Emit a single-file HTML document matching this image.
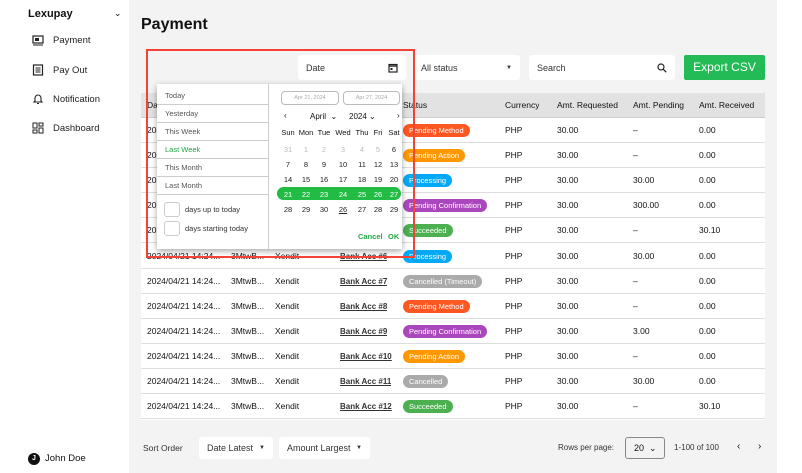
<!DOCTYPE html>
<html><head><meta charset="utf-8"><style>
*{box-sizing:border-box;margin:0;padding:0}
body{width:802px;height:473px;overflow:hidden;font-family:"Liberation Sans",sans-serif;background:#fff;position:relative;color:#111}
.a{position:absolute}
.side div.it{position:absolute;left:32px;font-size:9.5px;color:#222;display:flex;align-items:center}
.main{left:129px;top:0;width:648px;height:473px;background:#f3f3f3}
.box{background:#fff;border-radius:3px;font-size:9px;color:#333;display:flex;align-items:center;padding:0 8px}
.tbl{left:141px;top:93px;width:624px;height:327px;background:#fff;font-size:8.5px}
.hd{position:absolute;left:0;top:0;width:624px;height:25px;background:#e2e2e2;border-bottom:1px solid #ccc}
.row{position:absolute;left:0;width:624px;height:25px;border-bottom:1px solid #ddd}
.c{position:absolute;top:0;line-height:25px;white-space:nowrap;overflow:hidden}
.bd{position:absolute;top:6px;height:13px;line-height:13px;border-radius:7px;color:#fff;font-size:7.5px;padding:0 6px;white-space:nowrap}
.bank{text-decoration:underline;font-weight:bold;color:#333;font-size:8px}
.pop{left:157px;top:84px;width:245px;height:165px;background:#fff;box-shadow:0 2px 6px rgba(0,0,0,.35);font-size:7.5px}
.li{position:absolute;left:0;width:111px;height:18px;border-bottom:1px solid #ccc;padding-left:8px;line-height:18px;color:#555}
.cal span{position:absolute;width:18px;text-align:center;font-size:7.5px}
</style></head><body>
<div class="side">
<div class="a" style="left:28px;top:8px;font-weight:bold;font-size:11px">Lexupay</div>
<div class="a" style="left:114px;top:8px;font-size:9px">⌄</div>
<div class="it" style="top:35px"><svg width="12" height="11" viewBox="0 0 12 11"><rect x="1" y="1" width="10" height="7" fill="none" stroke="#222" stroke-width="1.2"/><rect x="3" y="3" width="4" height="3" fill="#222"/><line x1="1" y1="10" x2="11" y2="10" stroke="#222"/></svg><span style="margin-left:9px">Payment</span></div>
<div class="it" style="top:64px"><svg width="12" height="12" viewBox="0 0 12 12"><rect x="1.5" y="1" width="9" height="10" fill="none" stroke="#222" stroke-width="1.2"/><line x1="3.5" y1="4" x2="8.5" y2="4" stroke="#222"/><line x1="3.5" y1="6" x2="8.5" y2="6" stroke="#222"/><line x1="3.5" y1="8" x2="8.5" y2="8" stroke="#222"/></svg><span style="margin-left:9px">Pay Out</span></div>
<div class="it" style="top:93px"><svg width="12" height="12" viewBox="0 0 12 12"><path d="M3 8V5a3 3 0 0 1 6 0v3l1 1H2z M5 10.5h2" fill="none" stroke="#222" stroke-width="1.1"/></svg><span style="margin-left:9px">Notification</span></div>
<div class="it" style="top:122px"><svg width="12" height="12" viewBox="0 0 12 12"><rect x="1" y="1" width="4" height="5" fill="none" stroke="#222"/><rect x="7" y="1" width="4" height="3" fill="none" stroke="#222"/><rect x="1" y="8" width="4" height="3" fill="none" stroke="#222"/><rect x="7" y="6" width="4" height="5" fill="none" stroke="#222"/></svg><span style="margin-left:9px">Dashboard</span></div>
<div class="a" style="left:28px;top:453px;width:12px;height:12px;border-radius:6px;background:#111;color:#fff;font-size:7px;text-align:center;line-height:12px;font-weight:bold">J</div>
<div class="a" style="left:45px;top:453px;font-size:9.5px;line-height:12px">John Doe</div>
</div>
<div class="a main"></div>
<div class="a" style="left:141px;top:16px;font-size:16px;font-weight:bold">Payment</div>
<div class="a box" style="left:298px;top:55px;width:108px;height:25px;justify-content:space-between">Date<svg width="10" height="10" viewBox="0 0 10 10"><rect x="1" y="1.5" width="8" height="7.5" fill="none" stroke="#222" stroke-width="1.2"/><line x1="1" y1="3" x2="9" y2="3" stroke="#222" stroke-width="1.4"/><rect x="2.5" y="5" width="2" height="2" fill="#222"/></svg></div>
<div class="a box" style="left:413px;top:55px;width:107px;height:25px;justify-content:space-between">All status<span style="font-size:6px">▼</span></div>
<div class="a box" style="left:529px;top:55px;width:146px;height:25px;justify-content:space-between">Search<svg width="10" height="10" viewBox="0 0 10 10"><circle cx="4" cy="4" r="3" fill="none" stroke="#222" stroke-width="1.2"/><line x1="6.2" y1="6.2" x2="9.2" y2="9.2" stroke="#222" stroke-width="1.3"/></svg></div>
<div class="a" style="left:684px;top:55px;width:81px;height:25px;background:#22bb55;border-radius:2px;color:#fff;font-size:12px;text-align:center;line-height:25px">Export CSV</div>

<div class="a tbl">
<div class="hd"><div class="c" style="left:6px">Date</div><div class="c" style="left:262px">Status</div><div class="c" style="left:364px">Currency</div><div class="c" style="left:416px">Amt. Requested</div><div class="c" style="left:492px">Amt. Pending</div><div class="c" style="left:558px">Amt. Received</div></div>
</div>
<script>
var d=[["Pending Method","#ff5722","–","0.00"],["Pending Action","#ff9800","–","0.00"],["Processing","#03a9f4","30.00","0.00"],["Pending Confirmation","#ab47bc","300.00","0.00"],["Succeeded","#4caf50","–","30.10"],["Processing","#03a9f4","30.00","0.00"],["Cancelled (Timeout)","#aaaaaa","–","0.00"],["Pending Method","#ff5722","–","0.00"],["Pending Confirmation","#ab47bc","3.00","0.00"],["Pending Action","#ff9800","–","0.00"],["Cancelled","#aaaaaa","30.00","0.00"],["Succeeded","#4caf50","–","30.10"]];
var h="";for(var i=0;i<12;i++){var r=d[i];h+='<div class="row" style="top:'+(25+i*25.1)+'px"><div class="c" style="left:6px">2024/04/21 14:24...</div><div class="c" style="left:90px">3MtwB...</div><div class="c" style="left:134px">Xendit</div><div class="c bank" style="left:199px">Bank Acc #'+(i+1)+'</div><div class="c" style="left:262px;width:94px;height:25px"><div class="bd" style="left:0;background:'+r[1]+'">'+r[0]+'</div></div><div class="c" style="left:364px">PHP</div><div class="c" style="left:416px">30.00</div><div class="c" style="left:492px">'+r[2]+'</div><div class="c" style="left:558px">'+r[3]+'</div></div>';}
document.querySelector('.tbl').insertAdjacentHTML('beforeend',h);
</script>

<div class="a pop">
<div class="li" style="top:3px">Today</div>
<div class="li" style="top:21px">Yesterday</div>
<div class="li" style="top:39px">This Week</div>
<div class="li" style="top:57px;color:#22aa44">Last Week</div>
<div class="li" style="top:75px">This Month</div>
<div class="li" style="top:93px">Last Month</div>
<div class="a" style="left:7px;top:118px;width:16px;height:15px;border:1px solid #ccc;border-radius:3px"></div>
<div class="a" style="left:28px;top:121px;color:#333">days up to today</div>
<div class="a" style="left:7px;top:137px;width:16px;height:15px;border:1px solid #ccc;border-radius:3px"></div>
<div class="a" style="left:28px;top:140px;color:#333">days starting today</div>
<div class="a" style="left:111px;top:0;width:1px;height:165px;background:#ccc"></div>
<div class="a" style="left:124px;top:7px;width:58px;height:14px;border:1px solid #bbb;border-radius:4px;font-size:5.5px;color:#aaa;text-align:center;line-height:12px">Apr 21, 2024</div>
<div class="a" style="left:186px;top:7px;width:57px;height:14px;border:1px solid #bbb;border-radius:4px;font-size:5.5px;color:#aaa;text-align:center;line-height:12px">Apr 27, 2024</div>
<div class="a" style="left:127px;top:27px;font-size:8px">‹</div>
<div class="a" style="left:153px;top:28px;font-size:8px">April &nbsp;⌄</div>
<div class="a" style="left:192px;top:28px;font-size:8px">2024 ⌄</div>
<div class="a" style="top:27px;font-size:8px;left:240px">›</div>
<div class="cal" id="cal"></div>
<div class="a" style="left:201px;top:148px;color:#22aa44;font-weight:bold">Cancel</div>
<div class="a" style="left:231px;top:148px;color:#22aa44;font-weight:bold">OK</div>
</div>
<script>
var xs=[131,149,167,186,205,221,237],hd=["Sun","Mon","Tue","Wed","Thu","Fri","Sat"],c="";
xs=xs.map(function(x){return x-9});
for(var i=0;i<7;i++)c+='<span style="left:'+xs[i]+'px;top:44px">'+hd[i]+'</span>';
var days=[[31,1,2,3,4,5,6],[7,8,9,10,11,12,13],[14,15,16,17,18,19,20],[21,22,23,24,25,26,27],[28,29,30,'<u>26</u>',27,28,29]];
c+='<div class="a" style="left:120px;top:103px;width:124px;height:13px;background:#22bb44;border-radius:7px"></div>';
for(var w=0;w<5;w++)for(var i=0;i<7;i++){var col=w==0&&i<6?'#bbb':(w==3?'#fff':'#222');c+='<span style="left:'+xs[i]+'px;top:'+(61+w*15)+'px;color:'+col+'">'+days[w][i]+'</span>';}
document.getElementById('cal').innerHTML=c;
</script>
<div class="a" style="left:146px;top:49px;width:269px;height:209px;border:2px solid #f44336"></div>

<div class="a" style="left:143px;top:443px;font-size:8.5px;color:#333">Sort Order</div>
<div class="a box" style="left:199px;top:437px;width:74px;height:22px;justify-content:space-between">Date Latest<span style="font-size:6px">▼</span></div>
<div class="a box" style="left:279px;top:437px;width:91px;height:22px;justify-content:space-between">Amount Largest<span style="font-size:6px">▼</span></div>
<div class="a" style="left:558px;top:443px;font-size:8px;color:#333">Rows per page:</div>
<div class="a" style="left:625px;top:437px;width:40px;height:22px;border:1px solid #888;border-radius:3px;font-size:9px;line-height:20px;padding-left:8px">20 &nbsp;⌄</div>
<div class="a" style="left:674px;top:443px;font-size:8px;color:#333">1-100 of 100</div>
<div class="a" style="left:737px;top:441px;font-size:10px">‹</div>
<div class="a" style="left:758px;top:441px;font-size:10px">›</div>
</body></html>
